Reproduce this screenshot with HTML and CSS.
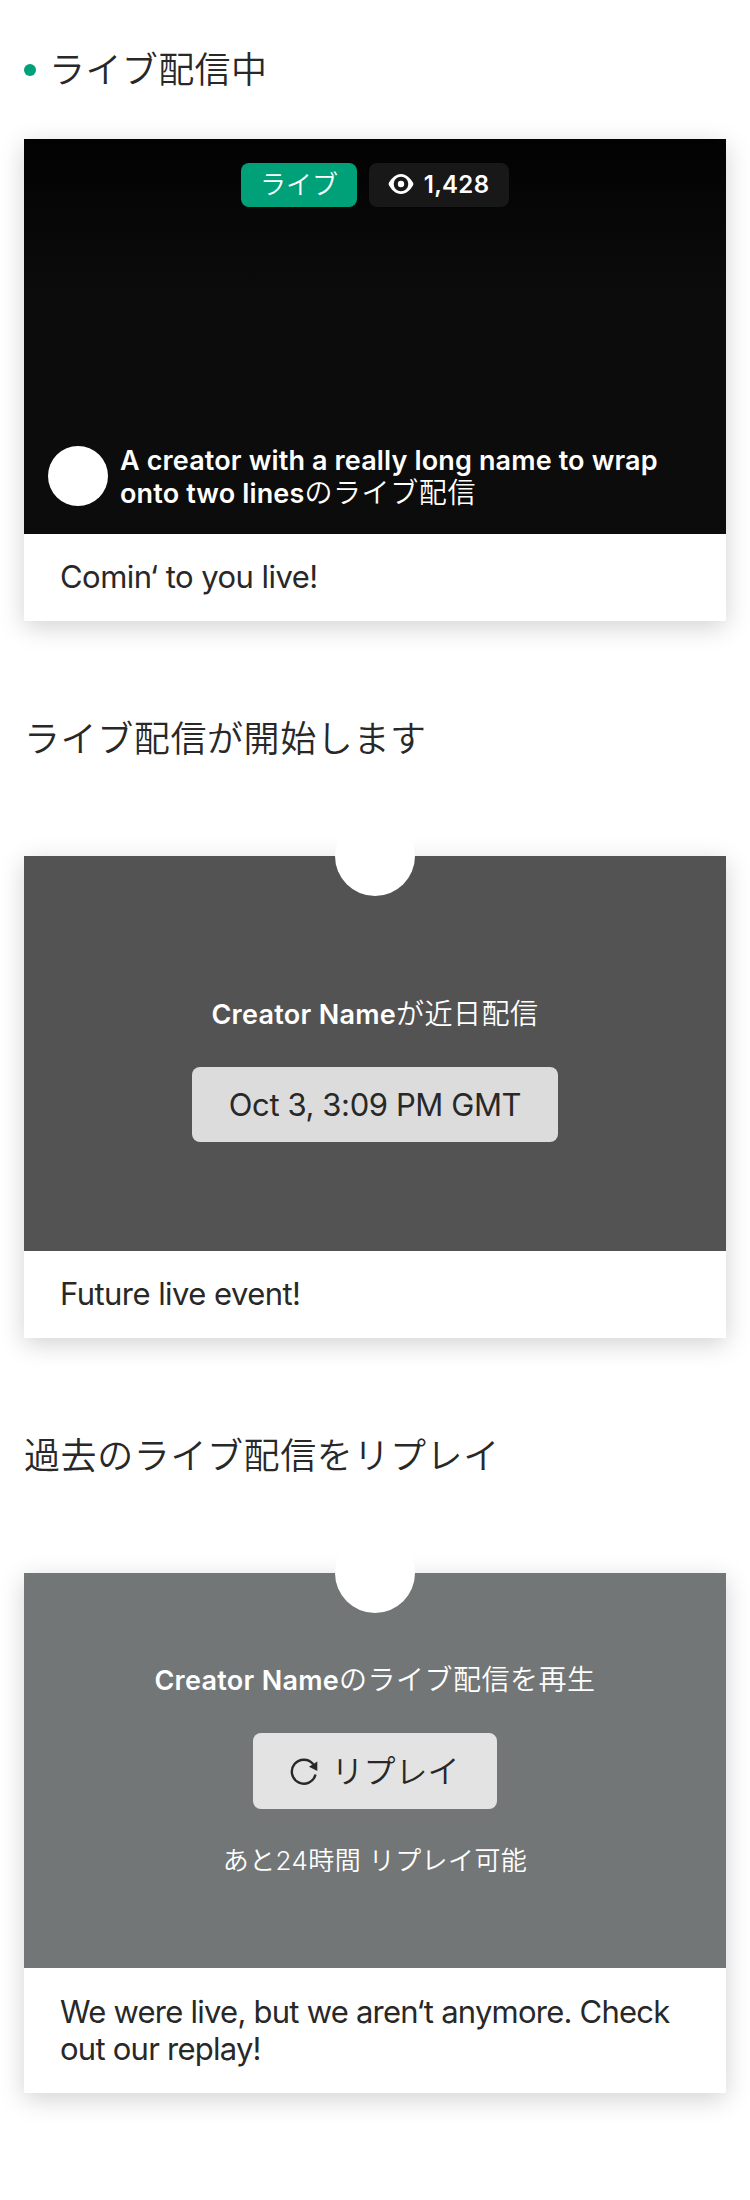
FILE: index.html
```html
<!DOCTYPE html>
<html lang="ja">
<head>
<meta charset="utf-8">
<title>ライブ配信</title>
<link rel="stylesheet" href="styles.css">
</head>
<body>
<main class="page">
  <section class="section">
    <h2 class="heading"><span class="dot"></span><span>ライブ配信中</span></h2>
    <article class="card card-live">
      <div class="media media-live">
        <div class="badges">
          <span class="badge badge-live">ライブ</span>
          <span class="badge badge-count">
            <svg class="eye" viewBox="0 0 26 22" width="26" height="22"><path fill="#fff" fill-rule="evenodd" d="M13 1C7.600 1 3.400 5.500.9 9.800Q.3 11 .9 12.200C3.400 16.500 7.600 21 13 21S22.600 16.500 25.100 12.200Q25.700 11 25.100 9.800C22.600 5.500 18.400 1 13 1ZM13 3.700A7.300 7.300 0 1 1 13 18.300A7.300 7.300 0 0 1 13 3.700Z"/><circle cx="13" cy="11" r="3.200" fill="#fff"/></svg>
            <span>1,428</span>
          </span>
        </div>
        <div class="creator">
          <span class="avatar"></span>
          <p class="creator-text"><b class="name name-long">A creator with a really long name to wrap<br>onto two lines</b>のライブ配信</p>
        </div>
      </div>
      <p class="caption">Comin‘ to you live!</p>
    </article>
  </section>

  <section class="section">
    <h2 class="heading">ライブ配信が開始します</h2>
    <article class="card card-offset">
      <span class="avatar-top"></span>
      <div class="media media-upcoming">
        <p class="status"><b class="name">Creator Name</b>が近日配信</p>
        <div class="button button-date"><span>Oct 3, 3:09 PM GMT</span></div>
      </div>
      <p class="caption">Future live event!</p>
    </article>
  </section>

  <section class="section">
    <h2 class="heading">過去のライブ配信をリプレイ</h2>
    <article class="card card-offset">
      <span class="avatar-top"></span>
      <div class="media media-replay">
        <p class="status"><b class="name">Creator Name</b>のライブ配信を再生</p>
        <div class="button button-replay">
          <svg class="replay-icon" viewBox="0 0 28 28" width="28" height="28"><path d="M23.300 7.300A12 12 0 1 0 25.500 17.500" fill="none" stroke="#282828" stroke-width="2.400"/><path d="M27.300 4.500V14L19 9.700Z" fill="#282828"/></svg>
          <span>リプレイ</span>
        </div>
        <p class="expires">あと24時間 リプレイ可能</p>
      </div>
      <p class="caption caption-long">We were live, but we aren‘t anymore. Check<br>out our replay!</p>
    </article>
  </section>
</main>
</body>
</html>
```

FILE: styles.css
```css
* { box-sizing: border-box; }
body {
  margin: 0;
  background: #fff;
  color: #282828;
  font-family: Inter, "Noto Sans CJK JP", sans-serif;
  font-weight: 350;
}
h2, p { margin: 0; }
.page { padding: 43px 24px 0; }
.section { height: 717px; }
.heading {
  display: flex;
  align-items: center;
  height: 52px;
  padding-top: 1px;
  font-size: 36px;
  line-height: 52px;
  font-weight: 350;
  letter-spacing: .6px;
  white-space: nowrap;
}
.section:first-child { height: 669px; }
.section:first-child .heading { padding-top: 2px; letter-spacing: .4px; }
.dot {
  width: 12px;
  height: 12px;
  margin-right: 13px;
  border-radius: 50%;
  background: #00a078;
}
.card {
  position: relative;
  background: #fff;
  box-shadow: 0 6px 24px rgba(0, 0, 0, .18);
}
.card-live { margin-top: 44px; }
.card-offset { margin-top: 92px; }
.media {
  display: flex;
  flex-direction: column;
  align-items: center;
  height: 395px;
  color: #fff;
}
.media-live {
  padding: 24px 24px 25px;
  justify-content: space-between;
  background: linear-gradient(#020202, #0c0c0c 40%);
}
.media-upcoming { padding-top: 138px; background: #535353; }
.media-replay { padding-top: 87px; background: #727676; }
.badges { display: flex; gap: 12px; }
.badge {
  display: flex;
  align-items: center;
  justify-content: center;
  height: 44px;
  border-radius: 8px;
  line-height: 44px;
}
.badge-live { width: 116px; background: #00a078; font-size: 26px; }
.badge-count {
  width: 140px;
  gap: 10px;
  padding-right: 1px;
  background: #181818;
  font-size: 24px;
  font-weight: 600;
  letter-spacing: .3px;
}
.eye { margin-bottom: 2px; }
.creator {
  display: flex;
  align-items: center;
  align-self: stretch;
  gap: 12px;
}
.avatar {
  flex: none;
  width: 60px;
  height: 60px;
  border-radius: 50%;
  background: #fff;
}
.creator-text {
  padding-top: 1px;
  margin-bottom: -1px;
  font-size: 28px;
  line-height: 33px;
  letter-spacing: .6px;
  white-space: nowrap;
}
.name { font-weight: 600; font-size: 27px; letter-spacing: .28px; }
.name-long { letter-spacing: .14px; }
.status { font-size: 28px; line-height: 40px; letter-spacing: .5px; white-space: nowrap; }
.button {
  display: flex;
  align-items: center;
  justify-content: center;
  border-radius: 8px;
  color: #282828;
  white-space: nowrap;
}
.button-date {
  width: 366px;
  height: 75px;
  margin-top: 32px;
  background: #dcdcdc;
  font-size: 31px;
  font-weight: 400;
  letter-spacing: -.4px;
}
.button-replay {
  width: 244px;
  height: 76px;
  margin-top: 32px;
  padding-bottom: 4px;
  gap: 13px;
  background: #e3e3e3;
  font-size: 32px;
}
.replay-icon { margin-top: 4px; }
.expires {
  margin-top: 33px;
  font-size: 26px;
  line-height: 38px;
  letter-spacing: .4px;
  white-space: nowrap;
}
.avatar-top {
  position: absolute;
  top: -40px;
  left: 311px;
  width: 80px;
  height: 80px;
  border-radius: 50%;
  background: #fff;
}
.caption {
  padding: 24px 36px 26px;
  font-size: 31px;
  line-height: 37px;
  font-weight: 400;
  letter-spacing: -.55px;
  white-space: nowrap;
}
.caption-long { padding: 25px 36px 26px; letter-spacing: -.76px; }
```
